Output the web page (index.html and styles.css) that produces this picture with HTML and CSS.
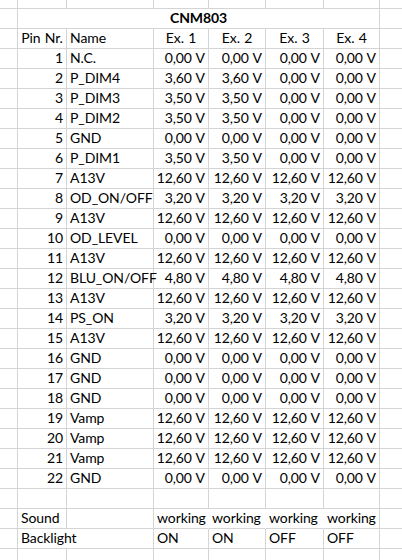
FILE: index.html
```html
<!DOCTYPE html>
<html>
<head>
<meta charset="utf-8">
<link rel="stylesheet" href="styles.css">
</head>
<body>
<div class="sheet">
  <div class="row top"><div class="c"></div><div class="c"></div><div class="c"></div><div class="c"></div><div class="c"></div><div class="c"></div><div class="c"></div><div class="c last"></div></div>
  <div class="row"><div class="c"></div><div class="c title">CNM803</div><div class="c last"></div></div>
  <div class="row"><div class="c"></div><div class="c ctr">Pin Nr.</div><div class="c">Name</div><div class="c ctr">Ex. 1</div><div class="c ctr">Ex. 2</div><div class="c ctr">Ex. 3</div><div class="c ctr">Ex. 4</div><div class="c last"></div></div>
  <div class="row"><div class="c"></div><div class="c num">1</div><div class="c">N.C.</div><div class="c num">0,00 V</div><div class="c num">0,00 V</div><div class="c num">0,00 V</div><div class="c num">0,00 V</div><div class="c last"></div></div>
  <div class="row"><div class="c"></div><div class="c num">2</div><div class="c">P_DIM4</div><div class="c num">3,60 V</div><div class="c num">3,60 V</div><div class="c num">0,00 V</div><div class="c num">0,00 V</div><div class="c last"></div></div>
  <div class="row"><div class="c"></div><div class="c num">3</div><div class="c">P_DIM3</div><div class="c num">3,50 V</div><div class="c num">3,50 V</div><div class="c num">0,00 V</div><div class="c num">0,00 V</div><div class="c last"></div></div>
  <div class="row"><div class="c"></div><div class="c num">4</div><div class="c">P_DIM2</div><div class="c num">3,50 V</div><div class="c num">3,50 V</div><div class="c num">0,00 V</div><div class="c num">0,00 V</div><div class="c last"></div></div>
  <div class="row"><div class="c"></div><div class="c num">5</div><div class="c">GND</div><div class="c num">0,00 V</div><div class="c num">0,00 V</div><div class="c num">0,00 V</div><div class="c num">0,00 V</div><div class="c last"></div></div>
  <div class="row"><div class="c"></div><div class="c num">6</div><div class="c">P_DIM1</div><div class="c num">3,50 V</div><div class="c num">3,50 V</div><div class="c num">0,00 V</div><div class="c num">0,00 V</div><div class="c last"></div></div>
  <div class="row"><div class="c"></div><div class="c num">7</div><div class="c">A13V</div><div class="c num">12,60 V</div><div class="c num">12,60 V</div><div class="c num">12,60 V</div><div class="c num">12,60 V</div><div class="c last"></div></div>
  <div class="row"><div class="c"></div><div class="c num">8</div><div class="c">OD_ON/OFF</div><div class="c num">3,20 V</div><div class="c num">3,20 V</div><div class="c num">3,20 V</div><div class="c num">3,20 V</div><div class="c last"></div></div>
  <div class="row"><div class="c"></div><div class="c num">9</div><div class="c">A13V</div><div class="c num">12,60 V</div><div class="c num">12,60 V</div><div class="c num">12,60 V</div><div class="c num">12,60 V</div><div class="c last"></div></div>
  <div class="row"><div class="c"></div><div class="c num">10</div><div class="c">OD_LEVEL</div><div class="c num">0,00 V</div><div class="c num">0,00 V</div><div class="c num">0,00 V</div><div class="c num">0,00 V</div><div class="c last"></div></div>
  <div class="row"><div class="c"></div><div class="c num">11</div><div class="c">A13V</div><div class="c num">12,60 V</div><div class="c num">12,60 V</div><div class="c num">12,60 V</div><div class="c num">12,60 V</div><div class="c last"></div></div>
  <div class="row"><div class="c"></div><div class="c num">12</div><div class="c">BLU_ON/OFF</div><div class="c num">4,80 V</div><div class="c num">4,80 V</div><div class="c num">4,80 V</div><div class="c num">4,80 V</div><div class="c last"></div></div>
  <div class="row"><div class="c"></div><div class="c num">13</div><div class="c">A13V</div><div class="c num">12,60 V</div><div class="c num">12,60 V</div><div class="c num">12,60 V</div><div class="c num">12,60 V</div><div class="c last"></div></div>
  <div class="row"><div class="c"></div><div class="c num">14</div><div class="c">PS_ON</div><div class="c num">3,20 V</div><div class="c num">3,20 V</div><div class="c num">3,20 V</div><div class="c num">3,20 V</div><div class="c last"></div></div>
  <div class="row"><div class="c"></div><div class="c num">15</div><div class="c">A13V</div><div class="c num">12,60 V</div><div class="c num">12,60 V</div><div class="c num">12,60 V</div><div class="c num">12,60 V</div><div class="c last"></div></div>
  <div class="row"><div class="c"></div><div class="c num">16</div><div class="c">GND</div><div class="c num">0,00 V</div><div class="c num">0,00 V</div><div class="c num">0,00 V</div><div class="c num">0,00 V</div><div class="c last"></div></div>
  <div class="row"><div class="c"></div><div class="c num">17</div><div class="c">GND</div><div class="c num">0,00 V</div><div class="c num">0,00 V</div><div class="c num">0,00 V</div><div class="c num">0,00 V</div><div class="c last"></div></div>
  <div class="row"><div class="c"></div><div class="c num">18</div><div class="c">GND</div><div class="c num">0,00 V</div><div class="c num">0,00 V</div><div class="c num">0,00 V</div><div class="c num">0,00 V</div><div class="c last"></div></div>
  <div class="row"><div class="c"></div><div class="c num">19</div><div class="c">Vamp</div><div class="c num">12,60 V</div><div class="c num">12,60 V</div><div class="c num">12,60 V</div><div class="c num">12,60 V</div><div class="c last"></div></div>
  <div class="row"><div class="c"></div><div class="c num">20</div><div class="c">Vamp</div><div class="c num">12,60 V</div><div class="c num">12,60 V</div><div class="c num">12,60 V</div><div class="c num">12,60 V</div><div class="c last"></div></div>
  <div class="row"><div class="c"></div><div class="c num">21</div><div class="c">Vamp</div><div class="c num">12,60 V</div><div class="c num">12,60 V</div><div class="c num">12,60 V</div><div class="c num">12,60 V</div><div class="c last"></div></div>
  <div class="row"><div class="c"></div><div class="c num">22</div><div class="c">GND</div><div class="c num">0,00 V</div><div class="c num">0,00 V</div><div class="c num">0,00 V</div><div class="c num">0,00 V</div><div class="c last"></div></div>
  <div class="row"><div class="c"></div><div class="c"></div><div class="c"></div><div class="c"></div><div class="c"></div><div class="c"></div><div class="c"></div><div class="c last"></div></div>
  <div class="row"><div class="c"></div><div class="c">Sound</div><div class="c"></div><div class="c over">working</div><div class="c over">working</div><div class="c over">working</div><div class="c">working</div><div class="c last"></div></div>
  <div class="row"><div class="c"></div><div class="c span2">Backlight</div><div class="c">ON</div><div class="c">ON</div><div class="c">OFF</div><div class="c">OFF</div><div class="c last"></div></div>
  <div class="row"><div class="c"></div><div class="c"></div><div class="c"></div><div class="c"></div><div class="c"></div><div class="c"></div><div class="c"></div><div class="c last"></div></div>
</div>
</body>
</html>
```

FILE: styles.css
```css
html, body {
  margin: 0;
  padding: 0;
  background: #ffffff;
}

body {
  width: 402px;
  height: 560px;
  overflow: hidden;
  font-family: "Lato", "Open Sans", sans-serif;
  font-size: 14px;
  letter-spacing: -0.1px;
  word-spacing: 0.8px;
  color: #000000;
}

.sheet {
  display: flex;
  flex-direction: column;
}

.row {
  display: grid;
  grid-template-columns: 18px 49px 87px 55px 57px 58px 56px 1fr;
  height: 20px;
  flex: none;
}

.row.top {
  height: 9px;
}

.c {
  box-sizing: border-box;
  border-right: 1px solid #d4d4d4;
  border-bottom: 1px solid #d4d4d4;
  display: flex;
  align-items: flex-end;
  justify-content: flex-start;
  padding: 0 2px 2px 3px;
  line-height: 16px;
  white-space: nowrap;
  overflow: visible;
  min-width: 0;
}

.c.last {
  border-right: none;
}

.c.num {
  justify-content: flex-end;
  padding: 0 3px 2px 2px;
}

.c.ctr {
  justify-content: center;
  padding: 0 0 2px 0;
}

.c.title {
  grid-column: 2 / 8;
  justify-content: center;
  font-weight: bold;
  padding: 0 0 2px 0;
}

.c.span2 {
  grid-column: 2 / 4;
}

.c.over {
  border-right-color: transparent;
}
```
